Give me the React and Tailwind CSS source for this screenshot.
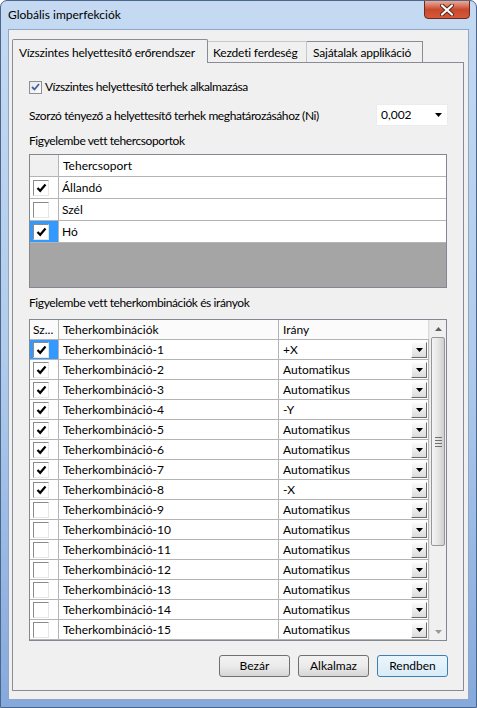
import React from 'react'

const GROUPS = [
  { name: 'Állandó', checked: true },
  { name: 'Szél', checked: false },
  { name: 'Hó', checked: true, selected: true },
]

const DIRS = ['+X', 'Automatikus', 'Automatikus', '-Y', 'Automatikus', 'Automatikus', 'Automatikus', '-X',
  'Automatikus', 'Automatikus', 'Automatikus', 'Automatikus', 'Automatikus', 'Automatikus', 'Automatikus']

const COMBOS = DIRS.map((dir, i) => ({
  name: `Teherkombináció-${i + 1}`,
  dir,
  checked: i < 8,
  selected: i === 0,
}))

function Arrow({ color = '#000' }) {
  return (
    <svg width="7" height="4" viewBox="0 0 7 4">
      <path d="M0 0 H7 L3.5 4 Z" fill={color} />
    </svg>
  )
}

// checkbox inside a grid cell (classic sunken look)
function GridCheck({ checked, selected }) {
  return (
    <div className={`w-[29px] h-full shrink-0 border-r border-[#b4b4b4] flex items-center pl-[3px] ${selected ? 'bg-[#3399ff]' : 'bg-white'}`}>
      <div className="w-[16px] h-[16px] bg-white border-t border-l border-[#8a8a8a] border-r border-b border-r-[#e6e6e6] border-b-[#e6e6e6] flex items-center justify-center">
        {checked && (
          <svg width="11" height="10" viewBox="0 0 11 10">
            <path d="M1.5 5 L4.2 7.8 L9.5 1.5" stroke="#000" strokeWidth="2.2" fill="none" />
          </svg>
        )}
      </div>
    </div>
  )
}

function CellDrop() {
  return (
    <div className="w-[16px] h-[16px] border border-t-white border-l-white border-r-[#6b6b6b] border-b-[#6b6b6b] bg-gradient-to-b from-[#fbfbfb] to-[#dcdcdc] flex items-center justify-center">
      <Arrow />
    </div>
  )
}

function Button({ children, primary }) {
  return (
    <button className={`h-[22px] w-[71px] rounded-[3px] border text-[12px] text-black ${primary ? 'border-[#3c7fb1] bg-gradient-to-b from-[#eaf6fd] to-[#d9ecf8]' : 'border-[#707070] bg-gradient-to-b from-[#f2f2f2] via-[#ebebeb] to-[#d6d6d6]'}`}>
      {children}
    </button>
  )
}

export default function App() {
  return (
    <div className="w-[477px] h-[708px] flex flex-col rounded-t-[7px] border border-[#4a6689] bg-gradient-to-b from-[#c5daf2] via-[#b0cbec] to-[#86a9dd] font-['Lato',sans-serif] text-[12px] text-black leading-none whitespace-nowrap overflow-hidden">
      {/* title bar */}
      <div className="h-[28px] shrink-0 flex items-start">
        <span className="ml-[7px] mt-[8px] text-[12px]">Globális imperfekciók</span>
        <div className="ml-auto mr-[6px] w-[46px] h-[19px] -mt-px rounded-b-[4px] border border-[#6b2a1d] bg-gradient-to-b from-[#e9a99a] via-[#c9482e] to-[#d45a38] flex items-center justify-center">
          <svg width="14" height="12" viewBox="0 0 14 12">
            <path d="M2 1.5 L12 10.5 M12 1.5 L2 10.5" stroke="#5a2418" strokeWidth="4" strokeLinecap="round" />
            <path d="M2 1.5 L12 10.5 M12 1.5 L2 10.5" stroke="#fff" strokeWidth="2.2" strokeLinecap="round" />
          </svg>
        </div>
      </div>

      {/* client area */}
      <div className="mx-[7px] mb-[7px] flex-1 bg-[#f0f0f0] border border-[#8fa7c5] pt-[8px] pl-[3px]">
        {/* tabs */}
        <div className="flex items-end h-[24px] tracking-[-0.2px]">
          <div className="relative z-10 w-[196px] h-[24px] -mb-px border-l border-t border-r border-[#898c95] bg-[#f0f0f0] rounded-t-[2px] pl-[6px] pt-[7px]">
            Vízszintes helyettesítő erőrendszer
          </div>
          <div className="w-[99px] h-[21px] border-t border-r border-[#c4c7cc] pl-[5px] pt-[5px]">Kezdeti ferdeség</div>
          <div className="w-[116px] h-[21px] border-t border-r border-[#898c95] pl-[6px] pt-[5px]">Sajátalak applikáció</div>
        </div>

        {/* tab panel */}
        <div className="w-[452px] h-[629px] border border-[#898c95] px-[16px] pt-[16px] flex flex-col">
          <div className="h-[16px] flex items-center">
            <div className="w-[13px] h-[13px] border border-[#8f8f8f] bg-gradient-to-br from-[#e4e9ef] to-[#fbfbfb] flex items-center justify-center">
              <svg width="9" height="8" viewBox="0 0 9 8">
                <path d="M1 4 L3.5 6.5 L8 1" stroke="#4a5f97" strokeWidth="1.8" fill="none" />
              </svg>
            </div>
            <span className="ml-[3px] tracking-[-0.4px]">Vízszintes helyettesítő terhek alkalmazása</span>
          </div>

          <div className="mt-[9px] h-[22px] flex items-center">
            <span className="mt-[2px] tracking-[-0.4px]">Szorzó tényező a helyettesítő terhek meghatározásához (Ni)</span>
            <div className="ml-auto -mr-px w-[72px] h-[22px] bg-white border border-[#ececec] flex items-center pl-[4px] pr-[5px]">
              <span>0,002</span>
              <span className="ml-auto"><Arrow /></span>
            </div>
          </div>

          <div className="mt-[8px] h-[14px] flex items-center tracking-[-0.4px]">Figyelembe vett tehercsoportok</div>

          {/* load groups grid */}
          <div className="mt-[6px] w-[418px] h-[134px] border border-[#828790] flex flex-col bg-[#a5a5a5]">
            <div className="h-[22px] shrink-0 flex border-b border-[#b4b4b4] bg-white">
              <div className="w-[29px] border-r border-[#b4b4b4] bg-[#f0f0f0]" />
              <div className="pl-[4px] flex items-center">Tehercsoport</div>
            </div>
            {GROUPS.map(g => (
              <div key={g.name} className="h-[22px] shrink-0 flex border-b border-[#b4b4b4] bg-white">
                <GridCheck checked={g.checked} selected={g.selected} />
                <div className="pl-[3px] flex items-center">{g.name}</div>
              </div>
            ))}
          </div>

          <div className="mt-[8px] h-[14px] flex items-center tracking-[-0.4px]">Figyelembe vett teherkombinációk és irányok</div>

          {/* load combinations grid */}
          <div className="mt-[9px] w-[418px] h-[322px] border border-[#828790] flex bg-white">
            <div className="w-[399px] flex flex-col">
              <div className="h-[20px] shrink-0 flex border-b border-[#b4b4b4] bg-[#fbfbfb]">
                <div className="w-[29px] border-r border-[#b4b4b4] pl-[3px] flex items-center">Sz...</div>
                <div className="w-[220px] border-r border-[#b4b4b4] pl-[4px] flex items-center">Teherkombinációk</div>
                <div className="flex-1 pl-[4px] flex items-center border-r border-[#dcdcdc]">Irány</div>
              </div>
              {COMBOS.map(c => (
                <div key={c.name} className="h-[20px] shrink-0 flex border-b border-[#b4b4b4]">
                  <GridCheck checked={c.checked} selected={c.selected} />
                  <div className="w-[220px] border-r border-[#b4b4b4] pl-[4px] flex items-center">{c.name}</div>
                  <div className="flex-1 pl-[4px] pr-[1px] flex items-center border-r border-[#b4b4b4]">
                    <span>{c.dir}</span>
                    <span className="ml-auto"><CellDrop /></span>
                  </div>
                </div>
              ))}
            </div>

            {/* scrollbar */}
            <div className="w-[17px] flex flex-col bg-[#f0f0f0] border-l border-[#e8e8e8]">
              <div className="h-[17px] flex items-center justify-center">
                <svg width="7" height="4" viewBox="0 0 7 4"><path d="M0 4 H7 L3.5 0 Z" fill="#606060" /></svg>
              </div>
              <div className="flex-1 flex flex-col">
                <div className="mx-[1px] h-[209px] rounded-[2px] border border-[#979797] bg-gradient-to-r from-[#f4f4f4] via-[#e6e6e6] to-[#cfcfcf] flex flex-col items-center justify-center gap-[2px]">
                  <div className="w-[7px] h-px bg-[#707070]" />
                  <div className="w-[7px] h-px bg-[#707070]" />
                  <div className="w-[7px] h-px bg-[#707070]" />
                  <div className="w-[7px] h-px bg-[#707070]" />
                </div>
              </div>
              <div className="h-[17px] flex items-center justify-center">
                <svg width="7" height="4" viewBox="0 0 7 4"><path d="M0 0 H7 L3.5 4 Z" fill="#9a9a9a" /></svg>
              </div>
            </div>
          </div>

          <div className="mt-[14px] flex justify-end gap-[8px] -mr-px">
            <Button>Bezár</Button>
            <Button>Alkalmaz</Button>
            <Button primary>Rendben</Button>
          </div>
        </div>
      </div>
    </div>
  )
}
